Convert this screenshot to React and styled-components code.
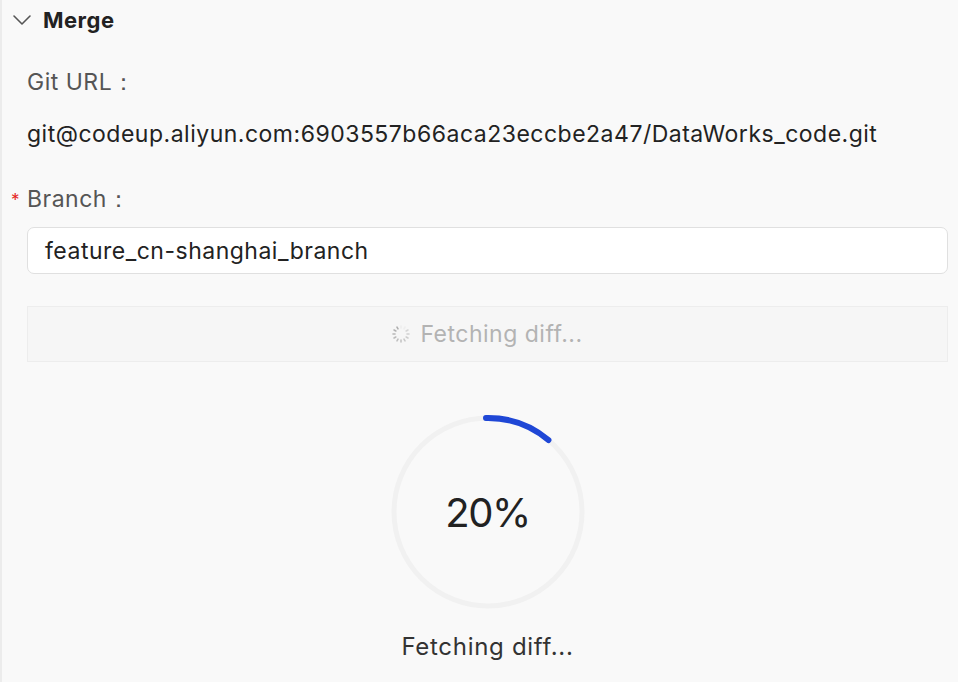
import React from 'react'
import styled, { createGlobalStyle } from 'styled-components'

const GlobalStyle = createGlobalStyle`
  html, body {
    margin: 0;
    padding: 0;
    background: #f9f9f9;
  }
  body {
    font-family: Inter, "Liberation Sans", sans-serif;
  }
`

const Panel = styled.div`
  position: relative;
  box-sizing: border-box;
  width: 958px;
  height: 682px;
  border-left: 2px solid #ececec;
  background: #f9f9f9;
  overflow: hidden;
`

const SideMark = styled.div`
  position: absolute;
  left: -2px;
  top: 584px;
  width: 2px;
  height: 64px;
  background: #d3dbf7;
`

const Header = styled.div`
  display: flex;
  align-items: center;
  gap: 11px;
  height: 40px;
  padding-left: 10px;
  font-size: 22px;
  letter-spacing: 0.5px;
  font-weight: 700;
  color: #222;
`

const Body = styled.div`
  padding: 0 10px 0 25px;
  font-size: 23px;
  letter-spacing: 0.5px;
`

const Label = styled.div`
  display: flex;
  align-items: center;
  height: 26px;
  margin-top: ${p => p.top}px;
  color: #555;
  position: relative;
`

const Required = styled.span`
  position: absolute;
  left: -16px;
  top: 4px;
  color: #e5251e;
  font-size: 17px;
`

const Value = styled.div`
  margin-top: 26px;
  color: #222;
  height: 26px;
  line-height: 26px;
`

const Input = styled.div`
  margin-top: 15px;
  box-sizing: border-box;
  height: 47px;
  display: flex;
  align-items: center;
  padding: 0 17px;
  background: #fff;
  border: 1px solid #e0e0e0;
  border-radius: 7px;
  color: #222;
`

const FetchButton = styled.div`
  margin-top: 32px;
  box-sizing: border-box;
  height: 56px;
  display: flex;
  align-items: center;
  justify-content: center;
  gap: 10px;
  border: 1px solid #ededed;
  background: #f6f6f6;
  color: #b3b3b3;
`

const ProgressWrap = styled.div`
  display: flex;
  flex-direction: column;
  align-items: center;
  margin-top: 52px;
`

const Ring = styled.div`
  position: relative;
  width: 196px;
  height: 196px;
  display: flex;
  align-items: center;
  justify-content: center;
`

const RingSvg = styled.svg`
  position: absolute;
  inset: 0;
`

const Percent = styled.div`
  font-size: 40px;
  letter-spacing: -1.5px;
  color: #222;
`

const Status = styled.div`
  margin-top: 22px;
  font-size: 24px;
  letter-spacing: 0.7px;
  color: #333;
`

const Chevron = () => (
  <svg width="20" height="12" viewBox="0 0 20 12" fill="none">
    <path d="M2 2l8 8 8-8" stroke="#555" strokeWidth="1.6" strokeLinecap="round" strokeLinejoin="round" />
  </svg>
)

const Spinner = () => {
  const dots = Array.from({ length: 12 }, (_, i) => i)
  return (
    <svg width="18" height="18" viewBox="0 0 18 18">
      {dots.map(i => {
        const a = (i / 12) * Math.PI * 2
        const x1 = 9 + Math.sin(a) * 6
        const y1 = 9 - Math.cos(a) * 6
        const x2 = 9 + Math.sin(a) * 8
        const y2 = 9 - Math.cos(a) * 8
        return (
          <line key={i} x1={x1} y1={y1} x2={x2} y2={y2} stroke="#aaa"
            strokeWidth="1.6" strokeLinecap="round" opacity={i < 2 ? 0.1 : 0.3 + (i / 12) * 0.7} />
        )
      })}
    </svg>
  )
}

const ProgressRing = ({ angle }) => {
  const cx = 98, cy = 98, r = 94
  const rad = (angle * Math.PI) / 180
  const ex = cx + r * Math.sin(rad)
  const ey = cy - r * Math.cos(rad)
  return (
    <RingSvg width="196" height="196" viewBox="0 0 196 196">
      <circle cx={cx} cy={cy} r={r} fill="none" stroke="#f1f1f1" strokeWidth="5" />
      <path d={`M${cx - 2} ${cy - r} A${r} ${r} 0 0 1 ${ex} ${ey}`} fill="none"
        stroke="#1f47d6" strokeWidth="6" strokeLinecap="round" />
    </RingSvg>
  )
}

export default function App() {
  return (
    <>
      <GlobalStyle />
      <Panel>
        <SideMark />
        <Header>
          <Chevron />
          <span>Merge</span>
        </Header>
        <Body>
          <Label top={29}>Git URL：</Label>
          <Value>git@codeup.aliyun.com:6903557b66aca23eccbe2a47/DataWorks_code.git</Value>
          <Label top={39}><Required>*</Required>Branch：</Label>
          <Input>feature_cn-shanghai_branch</Input>
          <FetchButton>
            <Spinner />
            <span>Fetching diff...</span>
          </FetchButton>
          <ProgressWrap>
            <Ring>
              <ProgressRing angle={40} />
              <Percent>20%</Percent>
            </Ring>
            <Status>Fetching diff...</Status>
          </ProgressWrap>
        </Body>
      </Panel>
    </>
  )
}
